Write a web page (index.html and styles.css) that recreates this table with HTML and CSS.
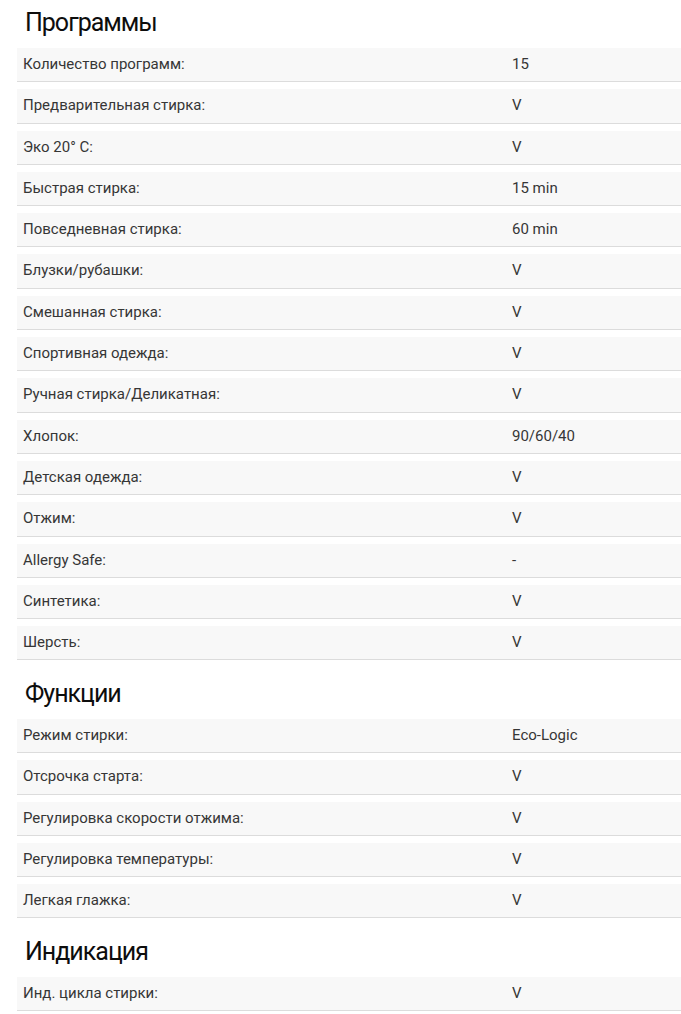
FILE: index.html
```html
<!DOCTYPE html>
<html lang="ru">
<head>
    <meta charset="UTF-8">
    <meta name="viewport" content="width=device-width, initial-scale=1.0">
    <title>Характеристики</title>
    <link rel="stylesheet" href="styles.css">
</head>
<body>
    <div class="specs">
        <div class="spec-section">
            <h2 class="spec-title">Программы</h2>
            <div class="spec-row"><div class="spec-label">Количество программ:</div><div class="spec-value">15</div></div>
            <div class="spec-row"><div class="spec-label">Предварительная стирка:</div><div class="spec-value">V</div></div>
            <div class="spec-row"><div class="spec-label">Эко 20° C:</div><div class="spec-value">V</div></div>
            <div class="spec-row"><div class="spec-label">Быстрая стирка:</div><div class="spec-value">15 min</div></div>
            <div class="spec-row"><div class="spec-label">Повседневная стирка:</div><div class="spec-value">60 min</div></div>
            <div class="spec-row"><div class="spec-label">Блузки/рубашки:</div><div class="spec-value">V</div></div>
            <div class="spec-row"><div class="spec-label">Смешанная стирка:</div><div class="spec-value">V</div></div>
            <div class="spec-row"><div class="spec-label">Спортивная одежда:</div><div class="spec-value">V</div></div>
            <div class="spec-row"><div class="spec-label">Ручная стирка/Деликатная:</div><div class="spec-value">V</div></div>
            <div class="spec-row"><div class="spec-label">Хлопок:</div><div class="spec-value">90/60/40</div></div>
            <div class="spec-row"><div class="spec-label">Детская одежда:</div><div class="spec-value">V</div></div>
            <div class="spec-row"><div class="spec-label">Отжим:</div><div class="spec-value">V</div></div>
            <div class="spec-row"><div class="spec-label">Allergy Safe:</div><div class="spec-value">-</div></div>
            <div class="spec-row"><div class="spec-label">Синтетика:</div><div class="spec-value">V</div></div>
            <div class="spec-row"><div class="spec-label">Шерсть:</div><div class="spec-value">V</div></div>
        </div>

        <div class="spec-section">
            <h2 class="spec-title">Функции</h2>
            <div class="spec-row"><div class="spec-label">Режим стирки:</div><div class="spec-value">Eco-Logic</div></div>
            <div class="spec-row"><div class="spec-label">Отсрочка старта:</div><div class="spec-value">V</div></div>
            <div class="spec-row"><div class="spec-label">Регулировка скорости отжима:</div><div class="spec-value">V</div></div>
            <div class="spec-row"><div class="spec-label">Регулировка температуры:</div><div class="spec-value">V</div></div>
            <div class="spec-row"><div class="spec-label">Легкая глажка:</div><div class="spec-value">V</div></div>
        </div>

        <div class="spec-section">
            <h2 class="spec-title">Индикация</h2>
            <div class="spec-row"><div class="spec-label">Инд. цикла стирки:</div><div class="spec-value">V</div></div>
        </div>
    </div>
</body>
</html>
```

FILE: styles.css
```css
* {
    margin: 0;
    padding: 0;
    box-sizing: border-box;
}

body {
    font-family: Roboto, 'Liberation Sans', Arial, sans-serif;
    font-size: 15px;
    line-height: 20px;
    color: #363636;
    background: #fff;
}

.specs {
    padding-left: 17px;
}

/* the last row's 7px margin collapses into this one */
.spec-section + .spec-section {
    margin-top: 10.5px;
}

.spec-title {
    height: 48px;
    padding: 6px 0 0 8px;
    font-family: Roboto, 'Liberation Sans', sans-serif;
    font-size: 25px;
    line-height: 34px;
    font-weight: 400;
    letter-spacing: -1px;
    color: #0d0d0d;
}

.spec-row {
    display: flex;
    height: 34.3px;
    padding-top: 6px;
    margin-bottom: 7px;
    background: #f8f8f8;
    border-bottom: 1px solid #dcdcdc;
}

.spec-label {
    width: 489px;
    padding-left: 6px;
}

.spec-value {
    padding-left: 6px;
}
```
